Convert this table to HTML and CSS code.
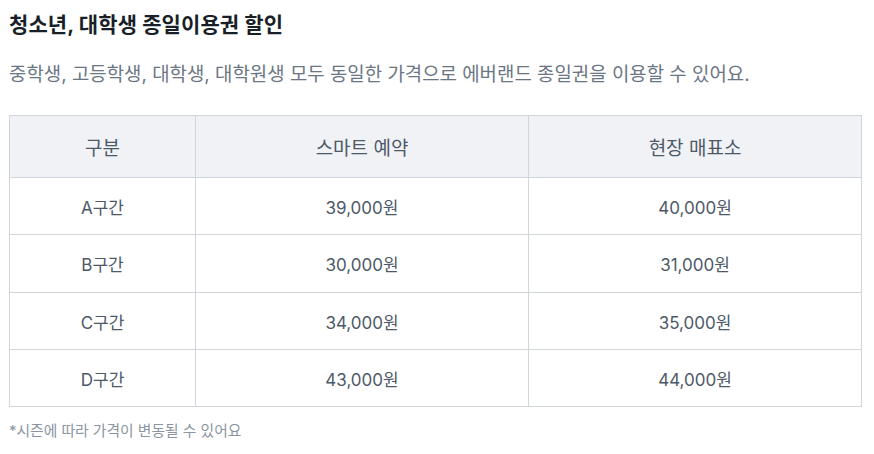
FILE: index.html
```html
<!DOCTYPE html>
<html lang="ko">
<head>
<meta charset="utf-8">
<link rel="stylesheet" href="styles.css">
</head>
<body>
<main class="wrap">
  <h2 class="title">청소년, 대학생 종일이용권 할인</h2>
  <p class="desc">중학생, 고등학생, 대학생, 대학원생 모두 동일한 가격으로 에버랜드 종일권을 이용할 수 있어요.</p>
  <table class="price">
    <colgroup><col class="c1"><col class="c2"><col class="c3"></colgroup>
    <thead>
      <tr><th>구분</th><th>스마트 예약</th><th>현장 매표소</th></tr>
    </thead>
    <tbody>
      <tr><td>A구간</td><td>39,000원</td><td>40,000원</td></tr>
      <tr><td>B구간</td><td>30,000원</td><td>31,000원</td></tr>
      <tr><td>C구간</td><td>34,000원</td><td>35,000원</td></tr>
      <tr><td>D구간</td><td>43,000원</td><td>44,000원</td></tr>
    </tbody>
  </table>
  <p class="note">*시즌에 따라 가격이 변동될 수 있어요</p>
</main>
</body>
</html>
```
FILE: styles.css
```css
html, body { margin: 0; padding: 0; background: #fff; }
body { font-family: Inter, "Noto Sans CJK KR", sans-serif; }
.wrap { padding: 10px 9px 0 9px; width: 852px; }
.title { margin: 0; font-size: 21px; font-weight: 700; line-height: 30px; color: #191f28; letter-spacing: 0.1px; }
.desc { margin: 20px 0 0; font-size: 18.9px; line-height: 30px; color: #6b7684; }
.price { margin-top: 25px; width: 852px; border-collapse: collapse; table-layout: fixed; }
.c1 { width: 186px; }
.c2 { width: 333px; }
.c3 { width: 333px; }
.price th, .price td { border: 1px solid #d1d6db; text-align: center; color: #4e5968; }
.price th { background: #f0f2f5; font-size: 19px; font-weight: 400; height: 61px; padding: 0; }
.price td { font-size: 17px; height: 56px; padding: 0; }
.price tbody tr:nth-child(2) td { height: 57px; }
.note { margin: 14px 0 0; font-size: 14.8px; color: #8b95a1; line-height: 20px; }
```
